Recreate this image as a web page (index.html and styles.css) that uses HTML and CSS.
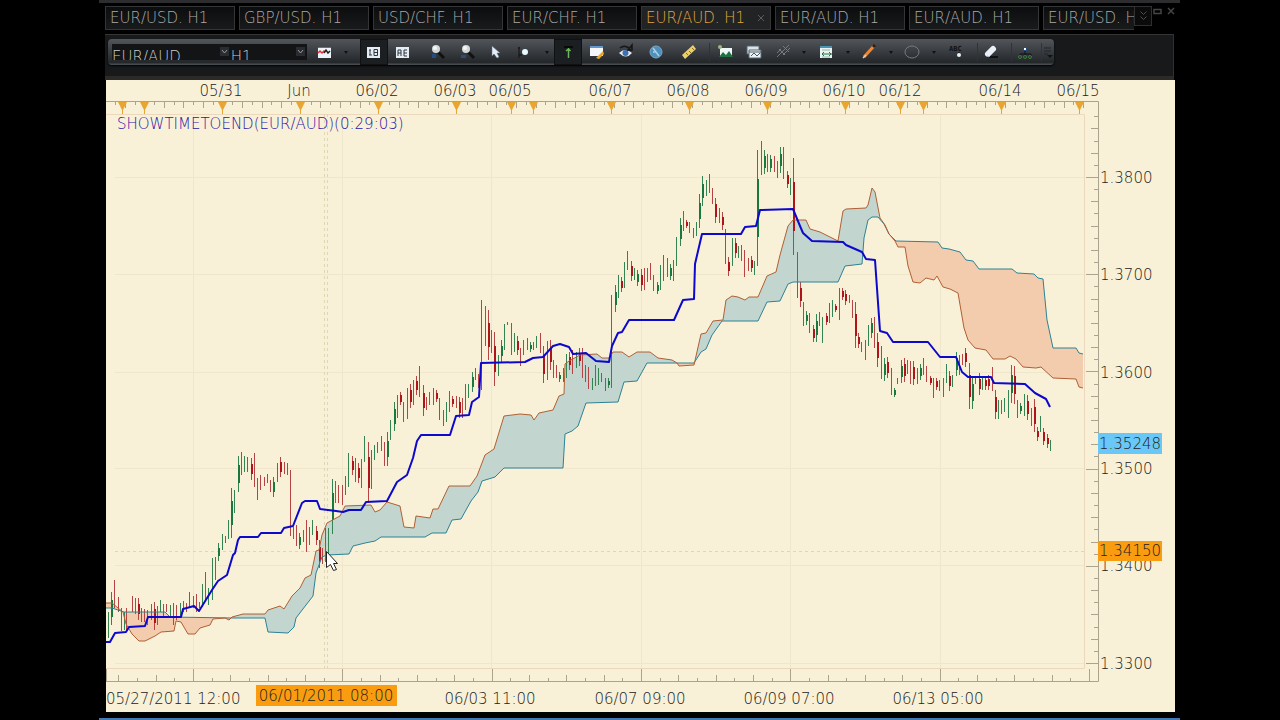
FILE: index.html
```
<!DOCTYPE html>
<html lang="en">
<head>
<meta charset="utf-8">
<title>EUR/AUD. H1</title>
<link rel="stylesheet" href="styles.css">
</head>
<body>
<div class="workspace">
  <div class="topline"></div>
  <main class="app">
    <nav class="tabs" aria-label="Charts">
      <div class="tab-list">
        <button class="tab">EUR/USD. H1</button>
        <button class="tab">GBP/USD. H1</button>
        <button class="tab">USD/CHF. H1</button>
        <button class="tab">EUR/CHF. H1</button>
        <button class="tab active">EUR/AUD. H1<svg width="8" height="8" viewBox="0 0 8 8"><path d="M1 1L7 7M7 1L1 7" stroke="#5c5c5c"/></svg></button>
        <button class="tab">EUR/AUD. H1</button>
        <button class="tab">EUR/AUD. H1</button>
        <button class="tab">EUR/USD. H1</button>
      </div>
      <button class="more" aria-label="More charts"><svg width="9" height="12" viewBox="0 0 9 12"><path d="M1.500 1.500l3 3 3-3M1.500 6.500l3 3 3-3" fill="none" stroke="#4e4e4e"/></svg></button>
      <div class="window-buttons">
        <button aria-label="Restore"><svg width="10" height="9" viewBox="0 0 10 9"><path d="M1 2.500h7v4H1z" fill="none" stroke="#454545" stroke-width="1.500"/></svg></button>
        <button aria-label="Close"><svg width="9" height="9" viewBox="0 0 9 9"><path d="M1 1l6 6M7 1L1 7" stroke="#454545" stroke-width="1.500"/></svg></button>
      </div>
    </nav>

    <section class="toolbar-panel">
      <div class="toolbar">
        <div class="combos">
          <label class="combo symbol"><select aria-label="Symbol"><option>EUR/AUD</option></select><svg width="9" height="9" viewBox="0 0 9 9"><path d="M2 3l2.500 3L7 3" fill="none" stroke="#999"/></svg></label>
          <label class="combo period"><select aria-label="Period"><option>H1</option></select><svg width="9" height="9" viewBox="0 0 9 9"><path d="M2 3l2.500 3L7 3" fill="none" stroke="#999"/></svg></label>
        </div>
        <div class="tools">
          <button aria-label="Chart type"><svg viewBox="0 0 18 18"><path d="M2 4h13v11H2z" fill="#edf3f8"/><path d="M2 4h13v1H2z" fill="#4676b8"/><path d="M2 10l2-2 2 2 2-2 1 1" fill="none" stroke="#d33" stroke-width="1.500"/><path d="M8 10l2-3 2 3 2-2" fill="none" stroke="#222" stroke-width="1.500"/></svg></button>
          <button class="drop" aria-label="Chart type options"></button>
          <span class="sep"></span>
          <button class="on" aria-label="Bid"><svg viewBox="0 0 18 18"><path d="M2 4h13v11H2z" fill="#e5edf2"/><path d="M4 7h2M5 7v5M4 12h3M9 6.500v6h3.500v-6H9M9 9.500h4" fill="none" stroke="#2d3742"/></svg></button>
          <button aria-label="Ask"><svg viewBox="0 0 18 18"><path d="M2 4h13v11H2z" fill="#e5edf2"/><path d="M4 13V7h3v6M4 10h3M13 7h-3v6h3M10 10h3" fill="none" stroke="#2d3742"/></svg></button>
          <span class="sep"></span>
          <button aria-label="Zoom in"><svg viewBox="0 0 18 18"><path d="M10 9l6 6" stroke="#111" stroke-width="3"/><path d="M4 11h4v4H4z" fill="#244d86"/><circle cx="8" cy="6" r="4" fill="#d4d7d7"/><circle cx="7" cy="5" r="2" fill="#f4f6f6"/></svg></button>
          <button aria-label="Zoom out"><svg viewBox="0 0 18 18"><path d="M10 9l6 6" stroke="#111" stroke-width="3"/><path d="M3 12h5v3H3z" fill="#244d86"/><circle cx="8" cy="6" r="4" fill="#d4d7d7"/><circle cx="7" cy="5" r="2" fill="#f4f6f6"/></svg></button>
          <button aria-label="Pointer"><svg viewBox="0 0 18 18"><path d="M6 3v10l2-2 3 4 2-1-2-4h3z" fill="#e5eef8" stroke="#5d7183" stroke-width=".5"/></svg></button>
          <button aria-label="Snap"><svg viewBox="0 0 18 18"><path d="M4 4v11M4 12h3M3 5h2" stroke="#111"/><circle cx="10" cy="9" r="3" fill="#e9fbff"/></svg></button>
          <button class="drop" aria-label="Snap options"></button>
          <button class="on" aria-label="Arrow"><svg viewBox="0 0 18 18"><path d="M5 4h9" stroke="#08090a" stroke-width="2"/><path d="M9.500 5v10M7 8l2.500-2 2 2" fill="none" stroke="#6db55b" stroke-width="1.500"/></svg></button>
          <button aria-label="Edit"><svg viewBox="0 0 18 18"><path d="M2 4h13v9H2z" fill="#f5f7f8"/><path d="M2 3h13v2H2z" fill="#5f97d1"/><path d="M15 8l-5 5-2 2 3 1 5-5z" fill="#e9a832"/></svg></button>
          <button aria-label="View"><svg viewBox="0 0 18 18"><path d="M2 10q6-6 13 0-6 7-13 0z" fill="#e7edf4"/><circle cx="8.500" cy="10" r="3" fill="#3c6fb4"/><path d="M3 5q5-4 10 1M15 2v5h-4z" fill="none" stroke="#151515" stroke-width="1.500"/></svg></button>
          <button aria-label="Clock"><svg viewBox="0 0 18 18"><circle cx="9" cy="9" r="6" fill="#4f91bc" stroke="#78a9c7"/><path d="M6 5l3 4 3 4M6 9h3" fill="none" stroke="#a6d0e5" stroke-width="1.500"/></svg></button>
          <span class="sep"></span>
          <button aria-label="Measure"><svg viewBox="0 0 18 18"><path d="M2 12L13 2l3 4L5 16z" fill="#edcf67"/><path d="M6 10l2 2M9 8l2 2M12 5l2 2" stroke="#856c27"/></svg></button>
          <span class="sep line"></span>
          <button aria-label="Insert picture"><svg viewBox="0 0 18 18"><path d="M4 5h12v9H4z" fill="#eff7f8"/><path d="M3 14l4-5 3 3 3-4 4 6z" fill="#207240"/><circle cx="4" cy="4" r="2" fill="#9bb979"/></svg></button>
          <button aria-label="Layers"><svg viewBox="0 0 18 18"><path d="M2 3h12v8H2z" fill="#dbe3e6" stroke="#526675"/><path d="M4 7h12v8H4z" fill="#eef1f2" stroke="#526675"/><path d="M4 9h12M6 13l3-3 3 3 3-3" stroke="#465965" fill="none"/></svg></button>
          <button aria-label="Lines"><svg viewBox="0 0 18 18"><path d="M2 14L14 2M4 6l6 6M8 3l6 6M2 10l4-4M8 12l7-7" stroke="#777b80" fill="none"/></svg></button>
          <button class="drop" aria-label="Line options"></button>
          <button aria-label="Indicators"><svg viewBox="0 0 18 18"><path d="M3 3h12v12H3z" fill="#e9f2ee"/><path d="M3 3h12v2H3z" fill="#4894b4"/><path d="M5 7h8M5 14h8" stroke="#8fb8b0"/><path d="M5 11h10M7 9l-2 2 2 2M12 9l2 2-2 2" stroke="#247249" fill="none"/></svg></button>
          <button class="drop" aria-label="Indicator options"></button>
          <button aria-label="Draw"><svg viewBox="0 0 18 18"><path d="M4 14L14 3" stroke="#ed8738" stroke-width="3"/><path d="M13 4l2-2" stroke="#341d12" stroke-width="3"/><path d="M3 15l3-3" stroke="#eed0a6" stroke-width="1.500"/></svg></button>
          <button class="drop" aria-label="Draw options"></button>
          <button aria-label="Ellipse"><svg viewBox="0 0 18 18"><ellipse cx="9" cy="9" rx="7" ry="6" fill="none" stroke="#777b80"/></svg></button>
          <button class="drop" aria-label="Shape options"></button>
          <button aria-label="Text"><svg viewBox="0 0 18 18"><text x="2" y="8" class="icon-text">ABC</text><path d="M12 9v4" stroke="#111"/><circle cx="12" cy="12" r="2" fill="#e9f4ff"/></svg></button>
          <span class="sep line"></span>
          <button aria-label="Erase"><svg viewBox="0 0 18 18"><path d="M5 14h11" stroke="#111" stroke-width="2"/><path d="M6 11l5-5" stroke="#e9f0f7" stroke-width="6" stroke-linecap="round"/><path d="M5 13l2 1 6-6" fill="none" stroke="#91a8c4"/></svg></button>
          <span class="sep line"></span>
          <button aria-label="Network"><svg viewBox="0 0 18 18"><path d="M9 7v5M4 13v-2h11v2" stroke="#111" fill="none"/><path d="M7 4h4v4H7z" fill="#244d86"/><path d="M8 5h2v2H8z" fill="#fff"/><g fill="none" stroke="#397d3c"><circle cx="4" cy="14" r="1.500"/><circle cx="9" cy="14" r="1.500"/><circle cx="14" cy="14" r="1.500"/></g></svg></button>
          <span class="sep line"></span>
          <button aria-label="Toolbar options"><svg class="grip" viewBox="0 0 10 18"><path d="M1 5h7M1 8h7M1 11h4" stroke="#22252a"/><path d="M4 12h6l-3 3z" fill="#111"/></svg></button>
        </div>
      </div>
    </section>

    <svg class="chart" id="chart" viewBox="106 80 1069 632" role="img" aria-label="EUR/AUD hourly chart"></svg>
  </main>
  <div class="taskbar"></div>
</div>
<script src="chart.js"></script>
</body>
</html>
```
FILE: styles.css
```
* { box-sizing: border-box; }
body {
  margin: 0;
  background: #000;
  overflow: hidden;
  font-family: "DejaVu Sans", sans-serif;
  font-weight: 200;
  font-size: 15px;
}
button { margin: 0; padding: 0; border: 0; background: none; font: inherit; color: inherit; }
svg { display: block; flex: none; }
.workspace { margin: 0 100px 0 99px; }
.topline { height: 3px; background: #2d2d2f; }
.app { padding: 0 6px; }

.tabs { display: flex; height: 31px; padding-top: 3px; }
.tab-list { display: flex; flex: 1; gap: 4px; min-width: 0; height: 24px; overflow: hidden; }
.tab {
  display: flex;
  align-items: center;
  gap: 12px;
  flex: 0 0 130px;
  padding-left: 4px;
  border: 1px solid #333536;
  background: linear-gradient(#0c0d0e, #191a1b);
  color: #aaa;
  white-space: nowrap;
}
.tab.active { color: #e0a83c; background: #222325; }
.more { display: grid; place-items: center; width: 18px; height: 20px; border: 1px solid #2f2f2f; background: #0b0b0b; }
.window-buttons { display: flex; gap: 4px; width: 22px; padding: 1px 0 0 1px; align-items: flex-start; }

.toolbar-panel {
  height: 46px;
  padding: 4px 119px 0 3px;
  background: #17191a;
  border-top: 1px solid #353535;
  border-right: 1px solid #303030;
  border-bottom: 4px solid #2c2a28;
}
.toolbar {
  display: flex;
  align-items: center;
  height: 26px;
  border-radius: 4px;
  background: linear-gradient(#52565a, #3d4145 40%, #24272a 90%, #505459);
  box-shadow: 0 1px 2px #000;
}
.combos { display: flex; flex: 1; padding-left: 4px; }
.combo { display: flex; position: relative; height: 16px; background: #121416; overflow: hidden; }
.combo select {
  width: 100%;
  height: 22px;
  padding: 4px 0 0 0;
  border: 0;
  appearance: none;
  background: transparent;
  color: #ccc;
  font: inherit;
}
.combo svg { position: absolute; right: 2px; top: 3px; background: #292c30; }
.symbol { flex: 117; }
.period { flex: 75; }
.tools {
  display: grid;
  grid-template-columns:
    35px 8px 10px 28px 29px 4px 31px 29px 28px 30px 15px 28px 30px 28px 32px 4px 26px
    8px 30px 28px 32px 8px 36px 8px 34px 10px 32px 12px 32px 6px 26px 8px 26px 4px 12px;
  height: 26px;
}
.tools button { display: grid; place-items: center; }
.tools svg { width: 18px; height: 18px; }
.tools .grip { width: 10px; }
.tools .on { background: #1c1f22; border: 1px solid #111; }
.tools .drop::after { content: ""; border: 2px solid transparent; border-top: 3px solid #101214; border-bottom: 0; }
.sep.line { border-right: 1px solid #303438; margin: 4px 0; }
.icon-text { font-family: "DejaVu Sans Mono", monospace; font-size: 7px; font-weight: 700; fill: #111; }

.chart { width: calc(100% + 1px); height: auto; background: #f9f1d7; }
.app .chart { padding: 0; width: calc(100% - 0px); margin-left: 1px; }
.chart text { font-size: 15px; fill: #222; }
.chart .middle { text-anchor: middle; }
.chart .indicator { fill: #2c14a8; }
.grid { fill: none; stroke: #efe6cc; }
.frame { fill: none; stroke: #ecd9bd; }
.axis { fill: none; stroke: #aaa48f; }
.cross { fill: none; stroke: #dfd6b4; stroke-dasharray: 3 3; }
.marker { fill: #e9a531; }
.cloud-up { fill: #c2d5cf; }
.cloud-down { fill: #f3cbad; }
.span-a { fill: none; stroke: #b05f35; }
.span-b { fill: none; stroke: #2c8296; }
.base { fill: none; stroke: #0c08cc; stroke-width: 2; stroke-linejoin: round; }
.bull { fill: none; stroke: #338452; }
.bear { fill: none; stroke: #b64444; }
.bull.body { stroke: #18783e; stroke-width: 2; }
.bear.body { stroke: #b01418; stroke-width: 2; }
.tag-last { fill: #69c8f8; }
.tag-cross { fill: #f99c10; }
.cursor { fill: #fff; stroke: #222; }
.taskbar { height: 2px; margin-top: 6px; background: #4279b4; }
```
FILE: chart.js
```
const NS = "http://www.w3.org/2000/svg";
const chart = document.getElementById("chart");

function add(tag, attrs, text) {
  const el = document.createElementNS(NS, tag);
  for (const k in attrs) el.setAttribute(k, attrs[k]);
  if (text) el.textContent = text;
  chart.appendChild(el);
}
const path = (cls, d) => add("path", { class: cls, d });
const parse = s => s.trim().split(/\s+/).map(p => p.split(",").map(Number));

// Ichimoku lines
const spanA = parse(`106,603 112,603 118,608 123,612 126,624 132,634 139,641 145,641 155,636 161,632 174,631 176,621
181,622 188,634 195,634 200,628 210,625 213,619 225,618 229,620 232,617 243,614 265,614 268,610 280,606 284,609 292,596
300,588 305,578 311,575 316,551 319,550 322,535 327,523 340,516 345,506 371,505 375,512 380,510 387,502 400,506 404,527
414,528 416,516 430,518 433,509 438,509 449,486 470,486 477,476 485,455 494,449 504,416 520,414 531,415 534,420 539,413
553,410 559,396 564,394 565,364 569,361 580,355 597,354 602,358 609,358 613,352 622,352 629,357 637,352 650,352 658,358
672,360 677,363 679,366 694,365 701,334 706,333 713,321 723,320 726,300 732,296 738,297 745,300 749,297 758,297 767,276
776,272 780,255 788,226 793,220 806,220 810,229 820,232 838,241 843,211 846,209 866,208 868,205 872,188 875,192 880,218
885,225 889,234 895,241 898,247 905,247 908,266 913,282 920,283 926,278 934,280 937,276 943,287 950,289 958,293 964,328
968,340 975,348 986,350 993,359 1005,359 1010,356 1016,359 1023,367 1036,368 1041,367 1053,378 1076,379 1079,387 1083,388`);
const spanB = parse(`106,608 112,608 118,610 124,612 165,612 170,617 232,618 265,618 268,632 288,633 294,627 296,618 306,605
313,596 316,573 322,557 327,555 349,554 353,546 365,543 375,541 381,537 425,537 432,533 446,533 452,520 461,519 471,501
478,492 482,481 495,477 504,468 563,468 565,434 572,431 578,426 586,403 618,402 624,382 637,381 647,363 677,363
694,363 701,352 706,349 712,335 722,321 758,321 767,302 780,301 788,284 793,282 838,282 845,266 862,264 864,238 868,220
872,217 878,217 884,224 889,234 896,241 938,242 942,248 949,249 960,252 966,260 973,261 979,269 1012,269 1017,273
1034,274 1038,278 1043,279 1047,320 1053,348 1076,348 1079,353 1083,354`);
const base = `106,642 110,642 115,633 126,632 129,627 145,626 148,617 181,617 183,609 194,606 199,611 212,590 218,581
227,575 233,555 235,553 238,540 240,537 258,537 261,533 281,533 284,528 293,526 302,503 305,501 317,501 320,509 336,511
343,512 349,510 361,510 366,502 387,501 397,482 407,475 413,458 417,441 421,435 450,435 456,416 469,415 472,402 479,397
481,363 525,362 533,358 543,357 553,346 560,344 569,347 573,354 586,353 596,361 609,362 612,346 618,333 622,332 629,320
674,320 683,300 694,299 695,264 702,234 741,234 745,227 756,226 760,210 793,209 800,226 803,233 812,241 843,242 846,245
862,252 866,259 875,260 880,331 887,333 893,342 928,342 940,357 956,357 962,372 968,377 991,377 994,383 1025,384
1035,393 1046,399 1050,407`;

// Bars: direction (upper case = wide body), x, high, low
const bars = `g108,612,638 G111,592,625 r114,580,608 r118,597,612 r121,608,631 g124,612,630 r126,608,630 r132,596,612
r135,598,614 R138,598,620 g141,608,622 r144,609,622 r147,610,625 r151,604,620 R154,602,630 r157,606,625 g160,600,612
g163,604,617 r166,604,612 g170,605,617 r173,603,625 r176,605,620 g180,603,618 g183,601,612 r186,603,612 g189,592,608
r193,596,608 r196,594,612 g199,602,608 g202,584,607 r205,572,600 g208,588,605 g212,558,600 g215,557,580 G218,543,561
g222,534,550 g225,536,543 g228,520,539 G231,488,538 g234,490,513 G238,456,492 r241,452,475 g244,456,472 g247,457,472
R251,458,480 r254,453,487 r257,478,500 r260,475,490 r264,477,486 g267,474,483 r270,480,492 G273,477,497 g277,463,482
R280,457,477 r284,462,474 r287,463,475 r290,470,536 g293,527,539 r296,525,546 G299,533,549 g303,530,542 r306,520,552
g309,527,545 g312,520,535 R316,526,545 R319,540,568 r322,548,564 g325,528,562 g328,528,555 G332,479,534 r335,481,503
r338,485,503 r342,485,505 g345,476,495 g348,453,487 R352,456,475 g355,458,482 R358,463,483 g361,459,488 g364,436,462
R368,442,503 g371,450,489 g374,445,460 g377,442,453 g381,436,451 r384,442,466 G387,432,466 g390,420,440 G394,402,431
g397,395,418 R400,392,405 r403,402,422 g407,388,419 R410,384,408 g413,380,405 R416,376,395 g419,366,397 R423,385,416
r426,397,410 g429,392,405 r433,388,405 R436,390,402 r439,398,420 r443,410,426 g446,402,422 g449,391,412 R452,396,407
r456,396,408 R459,397,418 r462,398,418 g465,384,410 g468,384,398 G472,372,392 g475,368,380 r478,374,388 g481,300,390
g485,306,346 R488,310,360 r491,330,353 R494,332,386 g498,355,376 G501,340,362 g504,324,350 g507,322,325 r511,323,355
g514,333,352 R517,336,355 r520,348,366 g523,340,355 g527,338,350 G530,342,352 r533,342,350 g536,336,348 r540,333,353
R543,346,383 g547,341,380 R550,340,370 r553,360,378 r556,365,378 G559,372,382 r563,368,382 g566,354,378 R569,352,370
r572,350,374 g576,352,368 R579,348,366 r582,348,378 r585,365,382 r588,367,389 g592,378,390 g595,365,386 g598,368,385
r601,373,382 r605,378,391 G608,378,388 g611,295,388 G615,285,312 g618,275,298 R621,277,292 g624,262,288 r627,251,270
R631,261,281 g634,268,280 G637,270,286 R641,269,291 r644,268,290 g647,268,282 r650,263,280 r653,275,291 G657,282,294
g660,265,290 r663,255,281 g667,258,277 G670,264,280 g673,260,281 g676,237,266 G680,218,246 r683,211,231 R686,220,228
r689,222,233 g693,228,238 g696,222,236 G699,194,228 G702,176,206 g706,180,196 r709,174,193 r712,188,204 R715,198,223
r719,208,223 R722,212,230 r725,229,264 R728,257,276 g732,238,266 R735,238,258 g738,246,258 r741,245,261 r744,250,277
r748,258,271 R751,256,272 g754,261,275 G757,150,266 r761,141,175 G764,150,174 r767,154,172 G770,155,172 r774,156,172
r777,161,178 G780,147,173 r783,147,179 R787,171,188 g790,178,195 R793,158,255 r797,252,298 R800,282,307 r803,302,326
G806,311,325 r809,313,333 R813,325,342 G816,314,342 r819,312,326 g822,317,343 R826,313,325 g829,303,323 g832,300,317
R835,304,312 r839,288,320 R842,288,300 R845,290,305 r849,295,303 r852,300,318 R855,302,348 R858,333,348 g861,342,352
r865,340,360 g868,325,346 G871,318,338 r874,317,348 R877,333,367 r881,346,379 G884,358,381 R887,357,378 r891,368,395
G894,388,397 g897,378,384 G901,360,383 R904,358,382 g907,360,374 r910,361,384 R913,361,385 g917,368,384 G920,364,380
g923,358,375 r926,366,382 R930,376,385 r933,378,398 R936,378,390 g939,380,391 g943,378,397 g946,364,383 R949,371,391
g952,375,387 G956,352,376 g959,355,375 r962,354,365 R965,348,367 R969,363,409 G972,376,409 r975,376,384 R979,373,395
g982,378,390 R985,376,390 R988,375,390 r992,367,391 R995,390,419 g998,400,419 g1001,400,414 g1004,398,412 g1008,390,418
G1011,365,403 R1014,366,404 r1017,400,418 G1020,403,414 g1024,394,416 R1027,395,420 r1031,408,426 R1034,399,432
R1037,427,441 g1040,416,432 R1043,428,445 R1047,434,448 g1050,440,451`.trim().split(/\s+/);

// Price and time grid
const prices = [["1.3800", 177.5], ["1.3700", 274.5], ["1.3600", 372.5], ["1.3500", 468.5], ["1.3400", 565.5], ["1.3300", 663.5]];
const hours = [193.5, 342.5, 491.5, 641.5, 790.5, 940.5];
path("grid", prices.map(p => `M115 ${p[1]}H1084`).join("") + hours.map(x => `M${x} 114V668`).join(""));
path("frame", "M106 114.5H1084.5V668.5H106");

let ticks = "M106 101.5H1098.5V681.5H106M106.5 669V681";
for (let i = -5; i < 41; i++) {
  const y = Math.round(177 + i * 12.15) + 0.5;
  ticks += `M${i % 8 === 0 ? 1086 : i % 2 ? 1094 : 1091} ${y}H1098`;
}
for (let i = -4; i < 49; i++) {
  const x = Math.round(193 + i * 18.67) + 0.5;
  ticks += `M${x} ${i % 8 === 0 ? 669 : i % 2 ? 678 : 675}V681`;
}
for (let i = 0; i < 100; i++) {
  const x = Math.round(115 + i * 9.78) + 0.5;
  ticks += `M${x} 102V${i % 2 ? 108 : 105}`;
}
path("axis", ticks);
path("marker", [122, 144, 222, 300, 378, 456, 511, 533, 611, 689, 767, 845, 900, 923, 1001, 1079]
  .map(x => `M${x - 4} 102H${x + 5}L${x + 1} 110V114H${x}V110Z`).join(""));

// Cloud fill, split where the spans cross
const line = pts => pts.map(p => p.join(",")).join(" ");
[[106, 232, "down"], [232, 677, "up"], [677, 694, "down"], [694, 889, "up"], [889, 1083, "down"]].forEach(([a, b, dir]) => {
  const cut = pts => pts.filter(p => p[0] >= a && p[0] <= b);
  add("polygon", { class: "cloud-" + dir, points: line(cut(spanA)) + " " + line(cut(spanB).reverse()) });
});
path("cross", "M115 551.5H1084M324.5 114V668M327.500 114V668");

const groups = { g: "", G: "", r: "", R: "" };
bars.forEach(b => {
  const [x, y1, y2] = b.slice(1).split(",").map(Number);
  groups[b[0].toLowerCase()] += `M${x + 0.5} ${y1}V${y2}`;
  if (b[0] > "Z") return;
  const q = Math.round((y2 - y1) / 4);
  groups[b[0]] += `M${x + 1} ${y1 + q}V${y2 - q}`;
});
path("bull", groups.g);
path("bear", groups.r);
path("bull body", groups.G);
path("bear body", groups.R);
add("polyline", { class: "span-b", points: line(spanB) });
add("polyline", { class: "span-a", points: line(spanA) });
add("polyline", { class: "base", points: base });

// Labels
[["05/31", 221], ["Jun", 299], ["06/02", 377], ["06/03", 455], ["06/05", 510], ["06/07", 610], ["06/08", 688],
 ["06/09", 766], ["06/10", 844], ["06/12", 900], ["06/14", 1000], ["06/15", 1078]]
  .forEach(([t, x]) => add("text", { class: "middle", x, y: 96 }, t));
add("text", { class: "indicator", x: 117, y: 129 }, "SHOWTIMETOEND(EUR/AUD)(0:29:03)");
prices.forEach(([t, y]) => add("text", { x: 1100, y: Math.round(y) + 5 }, t));
add("text", { x: 106, y: 704 }, "05/27/2011 12:00");
[["06/03 11:00", 490], ["06/07 09:00", 640], ["06/09 07:00", 789], ["06/13 05:00", 938]]
  .forEach(([t, x]) => add("text", { class: "middle", x, y: 704 }, t));
add("rect", { class: "tag-cross", x: 256, y: 685, width: 141, height: 21 });
add("text", { class: "middle", x: 326, y: 701 }, "06/01/2011 08:00");
add("rect", { class: "tag-last", x: 1098, y: 433, width: 64, height: 21 });
add("text", { x: 1099, y: 449 }, "1.35248");
add("rect", { class: "tag-cross", x: 1098, y: 541, width: 64, height: 20 });
add("text", { x: 1099, y: 556 }, "1.34150");

path("cursor", "M326.5 551.5V567.5L330.5 564.5L333.5 570.5L336.5 569.5L333.5 563.5H337.5Z");
```
